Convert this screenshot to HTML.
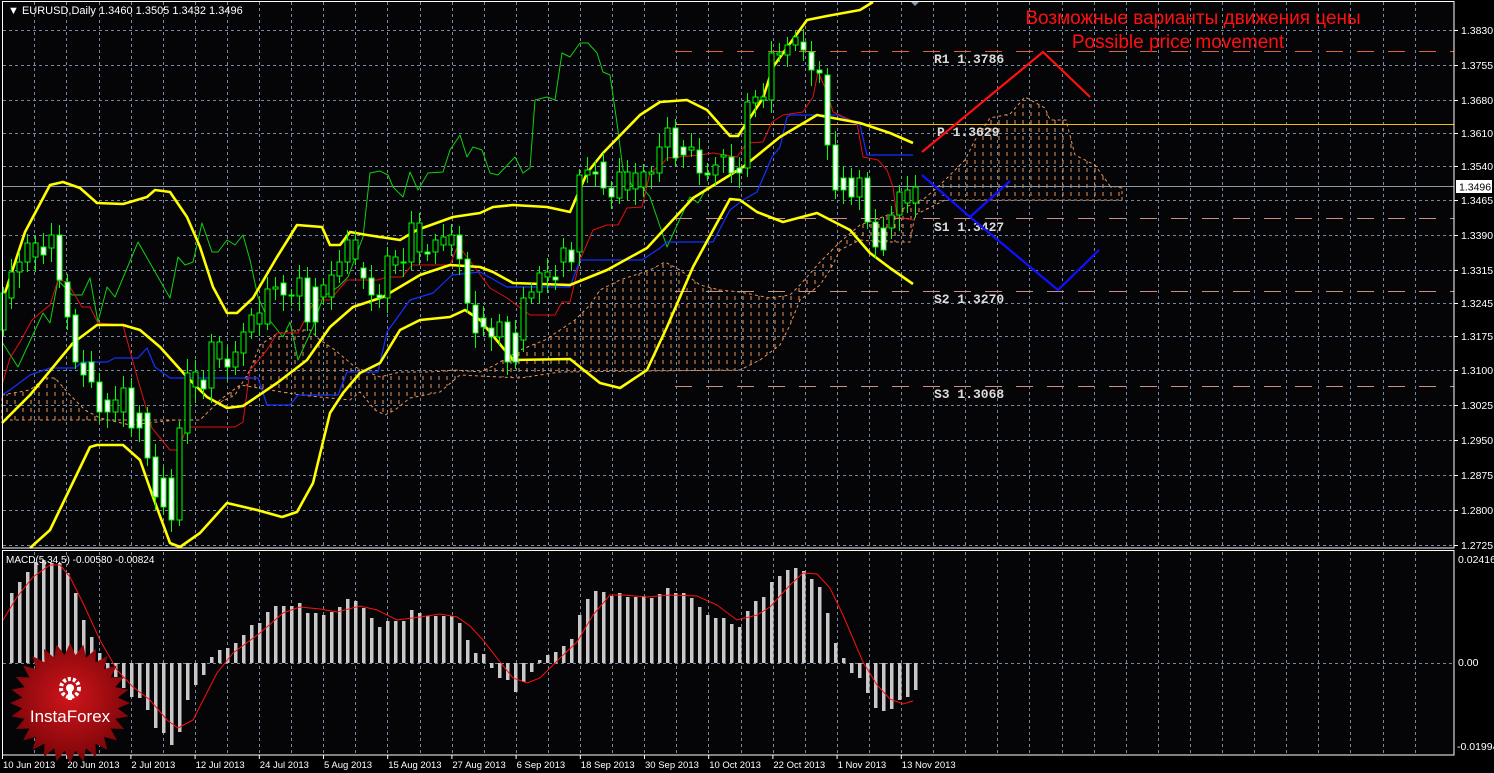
<!DOCTYPE html>
<html><head><meta charset="utf-8">
<style>
html,body{margin:0;padding:0;background:#000;}
body{width:1494px;height:773px;overflow:hidden;}
svg{display:block;}
</style></head>
<body>
<svg id="c" width="1494" height="773" xmlns="http://www.w3.org/2000/svg" font-family="Liberation Sans, sans-serif">
<rect width="1494" height="773" fill="#000"/>
<rect x="2" y="1" width="1452" height="547" fill="#050508"/>
<rect x="2" y="551" width="1452" height="204" fill="#050508"/>
<g id="grid" stroke="#7888a0" stroke-width="1" stroke-dasharray="3,3"></g>
<defs>
<pattern id="hatch" width="8" height="8" patternUnits="userSpaceOnUse" x="3">
<line x1="4" y1="0" x2="4" y2="4" stroke="#e8955a" stroke-width="1"/>
</pattern>
<radialGradient id="rg" cx="50%" cy="45%" r="55%">
<stop offset="0" stop-color="#d0151b"/><stop offset="1" stop-color="#7a0508"/>
</radialGradient>
</defs>
<polygon id="cloud" fill="url(#hatch)" stroke="#e8955a" stroke-width="1" stroke-dasharray="3,3"/>
<line x1="675" y1="51.5" x2="1454" y2="51.5" stroke="#e0603a" stroke-dasharray="17,14"/>
<line x1="675" y1="124.5" x2="1454" y2="124.5" stroke="#f0c000"/>
<line x1="675" y1="218.5" x2="1454" y2="218.5" stroke="#c89080" stroke-dasharray="17,14"/>
<line x1="675" y1="291.5" x2="1454" y2="291.5" stroke="#c89080" stroke-dasharray="17,14"/>
<line x1="675" y1="386.5" x2="1454" y2="386.5" stroke="#c89080" stroke-dasharray="17,14"/>
<line x1="2" y1="186.5" x2="1454" y2="186.5" stroke="#8898a8"/>
<g id="lines" fill="none"></g>
<g id="candles"></g>
<g font-family="Liberation Mono, monospace" font-weight="bold" font-size="13" fill="#dcdcdc">
<text x="934" y="63">R1 1.3786</text>
<text x="937" y="136">P 1.3629</text>
<text x="934" y="231">S1 1.3427</text>
<text x="934" y="303">S2 1.3270</text>
<text x="934" y="398">S3 1.3068</text>
</g>
<polyline points="922,152 1043,52 1090,97" stroke="#ff1010" stroke-width="2.2" fill="none"/>
<polyline points="922,175 970,217 1058,290 1099,250" stroke="#1010ff" stroke-width="2.2" fill="none"/>
<polyline points="970,217 1010,181" stroke="#1010ff" stroke-width="2.2" fill="none"/>
<text x="1193" y="24" font-size="19" fill="#ff1010" text-anchor="middle">Возможные варианты движения цены</text>
<text x="1178" y="48" font-size="19" fill="#ff1010" text-anchor="middle">Possible price movement</text>
<path d="M910,1 L920,1 L915,6 Z" fill="#8898a8"/>
<g id="macd"></g>
<rect x="2.5" y="1.5" width="1451.5" height="546.5" fill="none" stroke="#fff"/>
<rect x="2.5" y="550.5" width="1451.5" height="204.5" fill="none" stroke="#fff"/>
<text x="8" y="14" font-size="11" fill="#fff">▼ EURUSD,Daily  1.3460 1.3505 1.3432 1.3496</text>
<text x="6" y="563" font-size="10" fill="#fff">MACD(5,34,5) -0.00580 -0.00824</text>
<g id="axis" font-size="10.5" fill="#fff"></g>
<g id="dates" font-size="9.5" fill="#fff"></g>
<rect x="1456" y="180" width="36" height="13" fill="#fff"/>
<text x="1459" y="190.5" font-size="10.5" fill="#000">1.3496</text>
<g id="logo"></g>
</svg>
<script>
(function(){
var NS="http://www.w3.org/2000/svg";
function el(p,t,a,txt){var e=document.createElementNS(NS,t);for(var k in a)e.setAttribute(k,a[k]);if(txt)e.textContent=txt;document.getElementById(p).appendChild(e);return e;}
var hy=[30,65,100,133,166,200,235,270,303,336,370,405,440,475,510,545];
hy.forEach(function(y){el('grid','line',{x1:3,x2:1453,y1:y+.5,y2:y+.5});});
for(var k=1;k<45;k++){var x=Math.round(2.2+32.1*k)+.5;el('grid','line',{x1:x,x2:x,y1:2,y2:547});el('grid','line',{x1:x,x2:x,y1:552,y2:754});}
el('grid','line',{x1:3,x2:1453,y1:663.5,y2:663.5});
var labs=["1.3830","1.3755","1.3680","1.3610","1.3540","1.3465","1.3390","1.3315","1.3245","1.3175","1.3100","1.3025","1.2950","1.2875","1.2800","1.2725"];
hy.forEach(function(y,i){el('axis','line',{x1:1454,x2:1458,y1:y+.5,y2:y+.5,stroke:'#fff'});el('axis','text',{x:1461,y:y+4},labs[i]);});
el('axis','text',{x:1458,y:563},"0.02416");el('axis','text',{x:1458,y:666},"0.00");el('axis','text',{x:1457,y:750},"-0.01994");
var dates=["10 Jun 2013","20 Jun 2013","2 Jul 2013","12 Jul 2013","24 Jul 2013","5 Aug 2013","15 Aug 2013","27 Aug 2013","6 Sep 2013","18 Sep 2013","30 Sep 2013","10 Oct 2013","22 Oct 2013","1 Nov 2013","13 Nov 2013"];
dates.forEach(function(d,i){var x=2+64.2*i;el('dates','line',{x1:x+.5,x2:x+.5,y1:755,y2:759,stroke:'#fff'});el('dates','text',{x:x+1,y:768},d);});
var ctop=[[2,395],[30,390],[45,378],[55,378],[70,395],[85,410],[100,418],[130,425],[175,420],[200,420],[215,405],[235,395],[250,370],[260,345],[275,335],[290,330],[310,330],[320,340],[335,350],[355,367],[380,377],[400,372],[430,372],[455,370],[480,372],[495,365],[520,350],[545,340],[560,330],[575,320],[590,305],[600,290],[620,280],[650,270],[665,262],[680,270],[700,285],[720,290],[740,292],[770,298],[790,295],[800,285],[820,262],[840,242],[860,225],[880,218],[900,210],[925,198],[940,185],[955,170],[965,160],[975,140],[990,118],[1010,114],[1025,97],[1045,108],[1050,120],[1066,120],[1075,155],[1095,165],[1110,186],[1122,188]];
var cbot=[[1122,200],[945,200],[935,205],[915,215],[910,242],[880,242],[860,240],[840,250],[830,270],[820,285],[800,300],[790,325],[780,345],[760,360],[740,370],[560,372],[520,378],[460,375],[440,392],[410,398],[395,410],[385,415],[375,410],[360,392],[350,400],[300,395],[240,385],[220,400],[200,420],[30,420],[2,420]];
document.getElementById('cloud').setAttribute('points',ctop.concat(cbot).map(function(p){return p.join(',');}).join(' '));
function pl(pts,c,w){el('lines','polyline',{points:pts,stroke:c,'stroke-width':w,'stroke-linejoin':'round'});}
pl("2,342 18,367 43,313 50,323 58,280 72,295 82,295 90,278 98,322 107,287 115,297 138,242 170,298 178,257 185,265 193,262 202,223 212,252 218,252 227,240 235,245 243,235 250,260 258,297 267,317 283,337 290,322 298,360 313,327 323,297 338,287 348,277 363,237 370,173 380,171 388,175 393,187 403,197 410,172 418,190 428,173 443,172 450,150 460,135 467,157 473,147 482,150 490,173 498,175 515,157 523,173 530,168 535,100 547,97 555,100 562,53 570,57 580,43 588,43 597,53 603,72 610,75 617,123 623,170 633,187 642,187 650,197 667,247 690,197 698,203 707,187","#10d010",1);
pl("2,385 10,358 20,342 32,320 40,313 50,305 58,280 67,282 82,307 90,307 98,323 123,325 138,380 152,428 170,450 178,450 187,427 235,427 243,422 250,370 267,350 277,333 298,333 315,300 330,300 347,280 378,280 387,277 402,277 412,265 450,265 458,245 467,257 490,288 507,298 530,315 555,315 562,302 570,302 580,260 593,230 607,225 618,225 627,208 642,207 650,173 663,163 667,158 700,155 713,153 737,157 747,143 763,142 772,122 783,115 803,112 813,97 818,72 827,92 833,112 857,123 863,157 878,160 887,170 893,187 897,217 913,220","#e01010",1);
pl("2,395 10,390 30,375 50,368 75,368 82,362 107,362 115,358 138,358 147,348 155,367 170,378 258,378 267,405 290,405 298,395 338,395 347,372 378,372 387,332 410,300 433,293 452,275 480,272 507,287 570,287 580,260 642,260 660,248 667,242 713,242 730,210 743,200 757,192 772,157 780,147 787,117 790,115 837,115 860,125 867,155 913,155","#1530ff",1.2);
pl("2,302 25,232 50,185 63,182 80,188 97,203 123,204 147,197 155,190 170,192 187,217 200,247 213,287 227,313 237,313 253,298 277,257 297,225 322,227 330,245 340,245 350,232 367,235 400,240 417,230 453,217 480,213 493,207 513,205 547,207 570,212 587,173 603,153 640,115 660,102 687,100 707,110 730,136 738,136 763,98 773,67 807,20 827,16 860,10 873,2","#ffff00",2.6);
pl("2,423 30,395 73,343 97,325 123,325 140,330 160,347 187,377 207,397 227,408 243,406 277,383 307,360 330,327 353,307 383,297 420,275 450,265 480,267 493,272 513,283 570,285 607,270 647,248 693,198 743,167 780,137 817,115 860,123 890,133 913,143","#ffff00",2.6);
pl("30,548 50,530 90,447 97,445 123,445 140,460 153,497 170,543 180,547 200,533 227,503 257,510 282,517 297,512 313,483 330,413 343,393 360,373 380,363 400,330 420,320 450,317 465,310 480,320 513,360 570,359 600,383 620,388 647,370 667,327 693,267 730,199 740,200 757,212 783,222 817,213 850,230 870,253 890,268 913,284","#ffff00",2.6);
var cd=[[293,330],[272,298],[262,272],[243,262],[243,257],[247,255],[235,248],[235,280],[282,317],[315,362],[363,375],[362,382],[382,412],[400,412],[400,412],[388,412],[388,428],[413,428],[413,458],[457,497],[478,507],[478,520],[428,520],[373,433],[372,387],[380,389],[342,388],[342,359],[359,367],[352,367],[332,353],[315,332],[313,324],[289,324],[287,289],[283,295],[295,296],[278,296],[278,322],[287,322],[285,297],[275,297],[262,276],[240,262],[240,259],[268,278],[278,295],[295,298],[256,298],[257,265],[262,263],[223,262],[223,252],[252,254],[240,252],[237,245],[235,245],[235,259],[259,303],[305,333],[318,327],[328,337],[322,337],[322,362],[333,362],[298,340],[292,298],[273,292],[272,277],[277,280],[248,262],[250,262],[175,252],[170,175],[172,174],[162,188],[188,197],[172,198],[172,190],[173,189],[172,187],[172,174],[147,173],[128,147],[128,158],[147,155],[147,150],[150,173],[173,175],[165,175],[155,157],[157,173],[168,173],[102,168],[97,103],[97,100],[53,100],[53,55],[45,55],[37,45],[42,50],[52,70],[70,73],[75,145],[145,190],[178,190],[178,197],[178,197],[178,222],[222,247],[228,250],[215,228],[192,215],[190,203],[187,203]];
var pm=null;
cd.forEach(function(c,i){var x=3+8*i;var m=(c[0]+c[1])/2;var bear=pm!==null&&m>pm;pm=m;
var wt=c[0]-6-(i*7%9),wb=c[1]+6+(i*5%11);
el('candles','line',{x1:x+.5,x2:x+.5,y1:wt,y2:wb,stroke:'#00ff00'});
el('candles','rect',{x:x-2,y:c[0],width:5,height:Math.max(1,c[1]-c[0]),fill:bear?'#fff':'#000',stroke:'#00ff00','stroke-width':1});});
var mv=[593,582,572,562,560,563,563,573,593,620,637,653,672,677,688,697,698,710,728,733,745,732,700,685,675,657,650,648,643,635,625,623,612,606,606,606,603,613,613,615,612,607,599,601,608,618,627,621,621,621,610,613,616,616,616,616,623,640,653,654,668,678,680,692,682,672,660,655,652,646,639,615,599,591,592,596,593,597,597,596,598,594,588,593,593,598,607,615,618,618,624,627,611,601,597,582,576,570,568,571,579,587,613,643,658,673,678,693,708,711,709,700,697,690];
mv.forEach(function(v,i){var x=8*i+3+8;var y=Math.min(v,663),h=Math.abs(v-663);el('macd','rect',{x:x-1,y:y,width:3.5,height:Math.max(1,h),fill:'#c8c8c8'});});
el('macd','polyline',{points:"3,620 17,597 33,577 50,565 60,565 70,577 83,603 100,640 117,670 133,687 150,700 167,720 178,728 193,720 217,673 233,653 260,633 283,613 300,607 320,609 337,612 360,606 377,610 397,620 420,617 440,614 457,617 470,626 483,640 500,662 513,678 527,683 540,678 560,658 577,642 593,615 610,595 623,595 647,597 670,595 697,596 717,605 737,620 757,615 770,607 790,585 803,573 817,574 830,588 843,615 863,662 877,685 890,699 903,704 913,701",fill:'none',stroke:'#ff1010','stroke-width':1});
var pts=[],cx=70,cy=703,N=28;for(var j=0;j<2*N;j++){var r=j%2?48:60;var a=Math.PI*j/N;pts.push((cx+r*Math.cos(a)).toFixed(1)+','+(cy+r*Math.sin(a)).toFixed(1));}
el('logo','polygon',{points:pts.join(' '),fill:'url(#rg)'});
el('logo','circle',{cx:70,cy:688,r:9,fill:'none',stroke:'#fff','stroke-width':4,'stroke-dasharray':'3,2'});
el('logo','circle',{cx:70,cy:688,r:4,fill:'#fff'});
el('logo','rect',{x:68,y:688,width:4,height:12,fill:'#fff'});
el('logo','text',{x:70,y:722,'font-size':17,fill:'#fff','text-anchor':'middle'},'InstaForex');
})();
</script>
</body></html>
